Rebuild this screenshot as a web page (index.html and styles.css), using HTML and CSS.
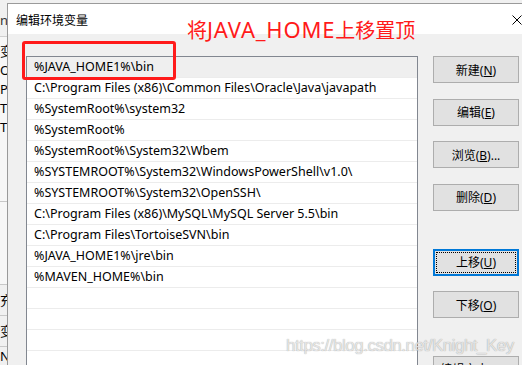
FILE: index.html
```html
<!DOCTYPE html>
<html lang="zh-CN">
<head>
    <meta charset="UTF-8">
    <title>编辑环境变量</title>
    <link rel="stylesheet" href="styles.css">
</head>
<body>
    <div class="screen">
        <!-- window behind the dialog, only its right edge shows -->
        <div class="backwin">
            <div class="bw-head">ng</div>
            <div class="bw-row bw-first">变</div>
            <div class="bw-row">Or</div>
            <div class="bw-row">Pa</div>
            <div class="bw-row">TE</div>
            <div class="bw-row">TM</div>
            <div class="bw-gap"></div>
            <div class="bw-lower">
                <div class="bw-row bw-tall">充</div>
                <div class="bw-row bw-tall">变</div>
                <div class="bw-row">N</div>
            </div>
        </div>

        <div class="dialog">
            <div class="titlebar">
                <span class="title">编辑环境变量</span>
                <svg class="close" width="10" height="10" viewBox="0 0 10 10">
                    <path d="M0.5 0.5 L9.5 9.5 M9.5 0.5 L0.5 9.5" stroke="#000" stroke-width="1" fill="none"/>
                </svg>
            </div>
            <div class="dlg-body">
                <ul class="pathlist">
                    <li class="selected">%JAVA_HOME1%\bin</li>
                    <li>C:\Program Files (x86)\Common Files\Oracle\Java\javapath</li>
                    <li>%SystemRoot%\system32</li>
                    <li>%SystemRoot%</li>
                    <li>%SystemRoot%\System32\Wbem</li>
                    <li>%SYSTEMROOT%\System32\WindowsPowerShell\v1.0\</li>
                    <li>%SYSTEMROOT%\System32\OpenSSH\</li>
                    <li>C:\Program Files (x86)\MySQL\MySQL Server 5.5\bin</li>
                    <li>C:\Program Files\TortoiseSVN\bin</li>
                    <li>%JAVA_HOME1%\jre\bin</li>
                    <li>%MAVEN_HOME%\bin</li>
                    <li></li>
                    <li></li>
                    <li></li>
                    <li></li>
                </ul>
                <div class="buttons">
                    <button class="btn">新建(<u>N</u>)</button>
                    <button class="btn">编辑(<u>E</u>)</button>
                    <button class="btn">浏览(<u>B</u>)...</button>
                    <button class="btn">删除(<u>D</u>)</button>
                    <button class="btn btn-focus btn-group">上移(<u>U</u>)</button>
                    <button class="btn">下移(<u>O</u>)</button>
                    <button class="btn btn-group">编辑文本(<u>T</u>)...</button>
                </div>
            </div>
        </div>

        <div class="note">将<span class="note-latin">JAVA_HOME</span>上移置顶</div>
        <div class="highlight"></div>
        <div class="watermark">https://blog.csdn.net/Knight_Key</div>
    </div>
</body>
</html>
```

FILE: styles.css
```css
body {
    margin: 0;
    background: #f0f0f0;
    font-family: "Noto Sans", "Noto Sans CJK SC", sans-serif;
    font-size: 12px;
    color: #000;
}

.screen {
    position: relative;
    width: 522px;
    height: 365px;
    overflow: hidden;
    display: flex;
}

/* background window strip */
.backwin {
    width: 7px;
    flex-shrink: 0;
    background: #f7f7f7;
    overflow: hidden;
    white-space: nowrap;
    font-size: 13px;
}

.bw-head {
    height: 36px;
    line-height: 40px;
    background: #f0f0f0;
    border-bottom: 1px solid #d0d0d0;
    color: #333;
}

.bw-row {
    height: 19px;
    line-height: 19px;
}

.bw-first {
    margin-top: 5px;
}

.bw-gap {
    height: 64px;
    border-bottom: 1px solid #c8c8c8;
}

.bw-lower {
    margin-top: 82px;
    border-top: 1px solid #c8c8c8;
    background: #f0f0f0;
}

.bw-tall {
    height: 30px;
    line-height: 30px;
    border-bottom: 1px solid #c8c8c8;
}

/* the dialog */
.dialog {
    width: 530px;
    flex-shrink: 0;
    margin-top: 3px;
    border-top: 1px solid #9a9a9a;
    border-left: 1px solid #9a9a9a;
    background: #f0f0f0;
}

.titlebar {
    height: 30px;
    background: #fff;
    display: flex;
    align-items: center;
    justify-content: space-between;
    padding: 0 16px 0 8px;
}

.title {
    font-family: "Noto Sans CJK SC", sans-serif;
    font-size: 12px;
    margin-top: 1px;
}

.close {
    display: block;
    margin-top: 1px;
}

.dlg-body {
    display: flex;
    align-items: flex-start;
    padding: 22px 0 0 18px;
}

.pathlist {
    list-style: none;
    margin: 0;
    padding: 0;
    width: 390px;
    border: 1px solid #828790;
    border-bottom: none;
    background: #fff;
}

.pathlist li {
    height: 20px;
    line-height: 20px;
    padding-left: 7px;
    font-size: 12.5px;
    border-bottom: 1px solid #ececec;
    white-space: nowrap;
    overflow: hidden;
}

.pathlist li.selected {
    background: #efefef;
}

.buttons {
    display: flex;
    flex-direction: column;
    margin-left: 15px;
}

.btn {
    width: 86px;
    height: 27px;
    margin: 0 0 15.67px 0;
    padding: 0;
    background: #e1e1e1;
    border: 1px solid #adadad;
    font-family: "Noto Sans", "Noto Sans CJK SC", sans-serif;
    font-size: 12px;
    color: #000;
    white-space: nowrap;
}

.btn u {
    text-underline-offset: 1px;
}

.btn-group {
    margin-top: 22px;
}

.btn-focus {
    border: 2px solid #0078d7;
    outline: 1px dotted #000;
    outline-offset: -4px;
}

/* annotations drawn over the screenshot */
.note {
    position: absolute;
    left: 187px;
    top: 16px;
    font-family: "Noto Sans", "Noto Sans CJK SC", sans-serif;
    font-size: 20px;
    line-height: 26px;
    color: #ff1a1a;
    white-space: nowrap;
}

.note-latin {
    font-size: 22px;
    letter-spacing: 0.8px;
}

.highlight {
    position: absolute;
    left: 22px;
    top: 41px;
    width: 148px;
    height: 33px;
    border: 3px solid #ff1a1a;
    border-radius: 3px;
}

.watermark {
    position: absolute;
    left: 286px;
    top: 336px;
    font-family: "Liberation Sans", sans-serif;
    font-size: 17px;
    letter-spacing: -0.5px;
    white-space: nowrap;
    color: rgba(240, 240, 240, 0.85);
    text-shadow: 0 0 1px rgba(0, 0, 0, 0.4);
}
```
